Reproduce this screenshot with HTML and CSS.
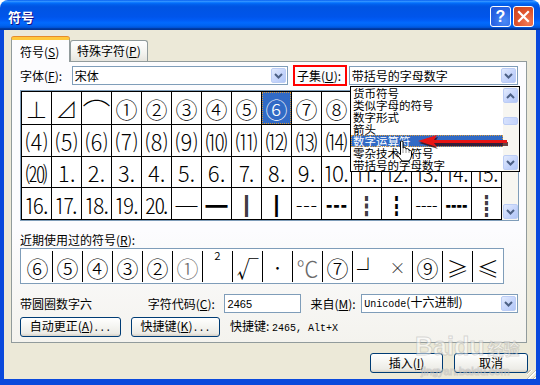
FILE: index.html
```html
<!DOCTYPE html>
<html lang="zh-CN">
<head>
    <meta charset="UTF-8">
    <title>符号</title>
    <link rel="stylesheet" href="styles.css">
</head>
<body>

<div class="window">
    <div class="titlebar">
        <span class="title">符号</span>
        <div class="caption-buttons">
            <span class="cap-btn cap-help">?</span>
            <span class="cap-btn cap-close">
                <svg width="13" height="13" viewBox="0 0 13 13"><path d="M2 2 L11 11 M11 2 L2 11" stroke="#fff" stroke-width="2.2" stroke-linecap="square"/></svg>
            </span>
        </div>
    </div>

    <div class="frame">
        <div class="tabs">
            <div class="tab active">符号(<u>S</u>)</div>
            <div class="tab">特殊字符(<u>P</u>)</div>
        </div>

        <div class="panel">
            <div class="font-row">
                <span class="font-label">字体(<u>F</u>):</span>
                <div class="combo combo-font">
                    <span class="combo-text">宋体</span>
                    <span class="drop-btn"><svg width="9" height="6" viewBox="0 0 9 6"><path d="M1 1 L4.5 4.5 L8 1" fill="none" stroke="#4D6185" stroke-width="2"/></svg></span>
                </div>
                <span class="subset-label">子集(<u>U</u>):</span>
                <div class="combo combo-subset">
                    <span class="combo-text">带括号的字母数字</span>
                    <span class="drop-btn"><svg width="9" height="6" viewBox="0 0 9 6"><path d="M1 1 L4.5 4.5 L8 1" fill="none" stroke="#4D6185" stroke-width="2"/></svg></span>
                </div>
            </div>

            <div class="symbol-box">
                <div class="symbol-grid">
                    <span class="cell">⊥</span><span class="cell">⊿</span><span class="cell arc">⌒</span><span class="cell">①</span>
                    <span class="cell">②</span><span class="cell">③</span><span class="cell">④</span><span class="cell">⑤</span>
                    <span class="cell sel">⑥</span><span class="cell">⑦</span><span class="cell">⑧</span><span class="cell">⑨</span>
                    <span class="cell">⑩</span><span class="cell">⑴</span><span class="cell">⑵</span><span class="cell">⑶</span>

                    <span class="cell">⑷</span><span class="cell">⑸</span><span class="cell">⑹</span><span class="cell">⑺</span>
                    <span class="cell">⑻</span><span class="cell">⑼</span><span class="cell">⑽</span><span class="cell">⑾</span>
                    <span class="cell">⑿</span><span class="cell">⒀</span><span class="cell">⒁</span><span class="cell">⒂</span>
                    <span class="cell">⒃</span><span class="cell">⒄</span><span class="cell">⒅</span><span class="cell">⒆</span>

                    <span class="cell">⒇</span><span class="cell">⒈</span><span class="cell">⒉</span><span class="cell">⒊</span>
                    <span class="cell">⒋</span><span class="cell">⒌</span><span class="cell">⒍</span><span class="cell">⒎</span>
                    <span class="cell">⒏</span><span class="cell">⒐</span><span class="cell">⒑</span><span class="cell">⒒</span>
                    <span class="cell">⒓</span><span class="cell">⒔</span><span class="cell">⒕</span><span class="cell">⒖</span>

                    <span class="cell">⒗</span><span class="cell">⒘</span><span class="cell">⒙</span><span class="cell">⒚</span>
                    <span class="cell">⒛</span><span class="cell">─</span><span class="cell">━</span><span class="cell heavy">│</span>
                    <span class="cell">┃</span><span class="cell">┄</span><span class="cell">┅</span><span class="cell heavy">┆</span>
                    <span class="cell">┇</span><span class="cell">┈</span><span class="cell">┉</span><span class="cell heavy">┊</span>
                </div>
                <div class="vscroll">
                    <span class="sb-btn"><svg width="9" height="6" viewBox="0 0 9 6"><path d="M1 5 L4.5 1.5 L8 5" fill="none" stroke="#4D6185" stroke-width="2"/></svg></span>
                    <span class="sb-track"></span>
                    <span class="sb-btn"><svg width="9" height="6" viewBox="0 0 9 6"><path d="M1 1 L4.5 4.5 L8 1" fill="none" stroke="#4D6185" stroke-width="2"/></svg></span>
                </div>
            </div>

            <div class="recent-label">近期使用过的符号(<u>R</u>):</div>
            <div class="recent">
                <span class="rcell">⑥</span><span class="rcell">⑤</span><span class="rcell">④</span><span class="rcell">③</span>
                <span class="rcell">②</span><span class="rcell gray">①</span><span class="rcell sup">²</span><span class="rcell">√</span>
                <span class="rcell dot">·</span><span class="rcell gray">℃</span><span class="rcell">⑦</span><span class="rcell open">┘</span>
                <span class="rcell small">×</span><span class="rcell">⑨</span><span class="rcell">≥</span><span class="rcell">≤</span>
            </div>

            <div class="info-row">
                <span class="char-name">带圆圈数字六</span>
                <span class="code-label">字符代码(<u>C</u>):</span>
                <div class="text-input">2465</div>
                <span class="from-label">来自(<u>M</u>):</span>
                <div class="combo combo-from">
                    <span class="combo-text"><span class="mono">Unicode</span>(十六进制)</span>
                    <span class="drop-btn"><svg width="9" height="6" viewBox="0 0 9 6"><path d="M1 1 L4.5 4.5 L8 1" fill="none" stroke="#4D6185" stroke-width="2"/></svg></span>
                </div>
            </div>

            <div class="action-row">
                <button class="xp-button btn-autocorrect">自动更正(<u>A</u>)<span class="mono">...</span></button>
                <button class="xp-button btn-shortcut">快捷键(<u>K</u>)<span class="mono">...</span></button>
                <span class="shortcut-text">快捷键: <span class="mono">2465, Alt+X</span></span>
            </div>

            <!-- opened subset dropdown, lies over the grid -->
            <div class="subset-list">
                <div class="list-items">
                    <div class="list-item">货币符号</div>
                    <div class="list-item">类似字母的符号</div>
                    <div class="list-item">数字形式</div>
                    <div class="list-item">箭头</div>
                    <div class="list-item hot">数字运算符</div>
                    <div class="list-item">零杂技术用符号</div>
                    <div class="list-item">带括号的字母数字</div>
                </div>
                <div class="list-scroll">
                    <span class="sb-btn"><svg width="9" height="6" viewBox="0 0 9 6"><path d="M1 5 L4.5 1.5 L8 5" fill="none" stroke="#4D6185" stroke-width="2"/></svg></span>
                    <span class="list-track"><span class="list-thumb"></span></span>
                    <span class="sb-btn"><svg width="9" height="6" viewBox="0 0 9 6"><path d="M1 1 L4.5 4.5 L8 1" fill="none" stroke="#4D6185" stroke-width="2"/></svg></span>
                </div>
            </div>

            <svg class="red-arrow" width="94" height="18" viewBox="0 0 94 18">
                <path d="M3 10 L22 4 L19 9 L92 9 L92 13 L19 13 L22 16 Z" fill="#3a0808" opacity="0.75"/>
                <path d="M2 8 L21 2 L18 7 L91 7 L91 10 L18 10 L21 14 Z" fill="#E81515"/>
            </svg>

            <svg class="hand" width="18" height="22" viewBox="0 0 18 22">
                <path d="M5.5 1.5 Q7 0.5 8 1.5 L8 8 Q9.5 7 11 8 L11 9 Q12.5 8 14 9.5 L14 10.5 Q15.5 10 16.5 11.5 L16.5 16 Q16 19 14 21 L7 21 L2 14.5 Q1 12.5 3 12.5 L5.5 14.5 Z" fill="#fff" stroke="#000" stroke-width="1"/>
                <path d="M8 8 L8 13 M11 9 L11 13 M14 10.5 L14 13" stroke="#999" stroke-width="1"/>
            </svg>
        </div>

        <div class="footer">
            <button class="xp-button btn-insert">插入(<u>I</u>)</button>
            <button class="xp-button btn-cancel">取消</button>
        </div>

        <div class="watermark">
            <span class="wm-logo">Bai<span class="wm-du">du</span><span class="wm-cn">经验</span></span>
            <span class="wm-url">jingyan.baidu.com</span>
        </div>
        <span class="grip"></span>
    </div>
</div>

</body>
</html>
```

FILE: styles.css
```css
/* XP style symbol dialog */
body {
    margin: 0;
    width: 540px;
    height: 385px;
    overflow: hidden;
    background: #fff;
    font-family: "Noto Sans CJK SC", sans-serif;
    font-size: 12px;
    line-height: 14px;
    color: #000;
}

u {
    text-decoration: underline;
    text-underline-offset: 1px;
}

.mono {
    font-family: "Liberation Mono", monospace;
    font-size: 10px;
}

.window {
    width: 540px;
    height: 385px;
    display: flex;
    flex-direction: column;
    border-radius: 8px 8px 0 0;
    overflow: hidden;
}

/* title bar */
.titlebar {
    height: 30px;
    flex: none;
    display: flex;
    align-items: center;
    justify-content: space-between;
    padding: 0 6px 0 8px;
    background: linear-gradient(#0058EE 0%, #3593FF 4%, #288EFF 6%, #127DFF 8%, #036FFC 10%, #0262EE 14%, #0057E5 20%, #0054E3 24%, #0055EB 56%, #005BF5 66%, #026AFE 76%, #0062EF 86%, #0052D6 92%, #0040AB 94%, #003092 100%);
}

.title {
    color: #fff;
    font-weight: bold;
    font-size: 13px;
    padding-top: 3px;
    text-shadow: 1px 1px #0F1089;
}

.caption-buttons {
    display: flex;
    gap: 2px;
    padding-top: 3px;
}

.cap-btn {
    width: 21px;
    height: 21px;
    box-sizing: border-box;
    border: 1px solid #fff;
    border-radius: 3px;
    display: flex;
    align-items: center;
    justify-content: center;
}

.cap-help {
    background: radial-gradient(circle at 70% 75%, #4C8BF5 0%, #2A66E6 55%, #1F55D6 100%);
    color: #fff;
    font-family: "Liberation Sans", sans-serif;
    font-weight: bold;
    font-size: 16px;
}

.cap-close {
    background: radial-gradient(circle at 75% 80%, #F27A55 0%, #E0552E 50%, #C9421C 100%);
}

/* window body */
.frame {
    flex: 1;
    position: relative;
    display: flex;
    flex-direction: column;
    background: #ECE9D8;
    border-style: solid;
    border-color: #0A49DC;
    border-width: 0 4px 6px 4px;
}

.tabs {
    display: flex;
    align-items: flex-end;
    height: 24px;
    margin: 7px 0 0 7px;
    position: relative;
    z-index: 1;
}

.tab {
    height: 21px;
    box-sizing: border-box;
    padding: 0 6px;
    display: flex;
    align-items: center;
    border: 1px solid #919B9C;
    border-bottom: none;
    border-radius: 3px 3px 0 0;
    background: linear-gradient(#FFFFFF, #F3F3EF 60%, #E6E5DE);
}

.tab.active {
    width: 59px;
    height: 25px;
    padding: 2px 0 0 8px;
    margin-bottom: -1px;
    background: #FCFCFE;
    border-top: 3px solid #FFC83C;
    box-shadow: 0 -1px 0 #E68B2C;
}

.panel {
    position: relative;
    width: 516px;
    height: 282px;
    box-sizing: border-box;
    margin-left: 7px;
    padding: 4px 8px 0;
    border: 1px solid #919B9C;
    background: linear-gradient(#FCFCFE 60%, #F4F3EE);
}

/* font / subset row */
.font-row {
    display: flex;
    align-items: center;
    height: 19px;
}

.font-label {
    width: 52px;
}

.subset-label {
    position: relative;
    width: 56px;
    box-sizing: border-box;
    margin-left: 5px;
    padding-left: 4px;
}

.subset-label::after {
    content: "";
    position: absolute;
    left: 0;
    top: -4px;
    width: 54px;
    height: 21px;
    box-sizing: border-box;
    border: 2px solid #F00;
}

.combo {
    height: 19px;
    box-sizing: border-box;
    display: flex;
    align-items: center;
    justify-content: space-between;
    padding-left: 2px;
    border: 1px solid #7F9DB9;
    background: #fff;
}

.combo-font {
    width: 217px;
}

.combo-subset {
    width: 170px;
}

.drop-btn, .sb-btn {
    width: 15px;
    height: 15px;
    margin-right: 1px;
    box-sizing: border-box;
    display: flex;
    align-items: center;
    justify-content: center;
    border: 1px solid #BCCDF5;
    border-radius: 2px;
    background: linear-gradient(135deg, #E3EBFD, #C3D3FB 60%, #B1C6F6);
}

/* symbol grid */
.symbol-box {
    display: flex;
    width: 499px;
    height: 131px;
    box-sizing: border-box;
    margin-top: 5px;
    border: 1px solid #7F9DB9;
}

.symbol-grid {
    display: grid;
    grid-template-columns: repeat(16, 29px);
    grid-template-rows: repeat(4, 1fr);
    gap: 1px;
    padding: 1px;
    width: 481px;
    box-sizing: border-box;
    background: #000;
}

.cell {
    display: flex;
    align-items: center;
    justify-content: center;
    background: #fff;
    font-family: "Noto Sans CJK SC", "DejaVu Sans", sans-serif;
    font-size: 22px;
    font-weight: 300;
    line-height: 24px;
}

.cell.arc {
    font-size: 28px;
    padding-top: 8px;
}

.cell.heavy {
    text-shadow: 1px 0 #000, -1px 0 #000;
}

.cell.sel {
    background: #316AC5;
    color: #fff;
    outline: 1px dotted #D89A3A;
    outline-offset: -1px;
}

.vscroll {
    width: 16px;
    display: flex;
    flex-direction: column;
    align-items: center;
    background: #F7F6F1;
}

.vscroll .sb-btn {
    margin: 1px 0;
}

.sb-track {
    flex: 1;
}

/* recently used */
.recent-label {
    margin-top: 13px;
    height: 12px;
    line-height: 12px;
}

.recent {
    display: flex;
    width: 484px;
    height: 36px;
    box-sizing: border-box;
    margin-top: 2px;
    padding: 2px 0 1px 2px;
    border: 1px solid #7F9DB9;
    background: #fff;
}

.rcell {
    width: 30px;
    box-sizing: border-box;
    display: flex;
    align-items: center;
    justify-content: center;
    border-right: 1px solid #000;
    font-family: "Noto Sans CJK SC", "DejaVu Sans", sans-serif;
    font-size: 22px;
    font-weight: 300;
    line-height: 24px;
}

.rcell:last-child, .rcell.open {
    border-right: none;
}

.rcell.gray {
    color: #6A6A6A;
}

.rcell.sup {
    align-items: flex-start;
    font-size: 18px;
    line-height: 18px;
}

.rcell.dot {
    font-size: 14px;
}

.rcell.small {
    font-size: 16px;
    color: #333;
}

/* info and buttons */
.info-row {
    display: flex;
    align-items: center;
    height: 19px;
    margin-top: 10px;
}

.char-name {
    width: 128px;
}

.code-label {
    width: 76px;
}

.text-input {
    width: 78px;
    height: 19px;
    box-sizing: border-box;
    padding: 2px 0 0 3px;
    border: 1px solid #7F9DB9;
    background: #fff;
    font-family: "Liberation Sans", sans-serif;
    font-size: 11px;
}

.from-label {
    width: 51px;
    margin-left: 9px;
}

.combo-from {
    width: 157px;
}

.action-row {
    display: flex;
    align-items: center;
    gap: 10px;
    margin-top: 4px;
}

.xp-button {
    height: 20px;
    box-sizing: border-box;
    padding: 0;
    border: 1px solid #003C74;
    border-radius: 3px;
    background: linear-gradient(#FFFFFF, #F4F4F0 50%, #ECEBE6 85%, #D6D0C5);
    font-family: "Noto Sans CJK SC", sans-serif;
    font-size: 12px;
    line-height: 14px;
    color: #000;
}

.btn-autocorrect {
    width: 101px;
}

.btn-shortcut {
    width: 89px;
}

/* opened dropdown list */
.subset-list {
    position: absolute;
    left: 338px;
    top: 24px;
    width: 170px;
    height: 86px;
    box-sizing: border-box;
    display: flex;
    border: 1px solid #000;
    background: #fff;
    overflow: hidden;
}

.list-items {
    flex: 1;
}

.list-item {
    height: 12px;
    line-height: 12px;
    font-size: 11.5px;
    padding-left: 2px;
    white-space: nowrap;
}

.list-item.hot {
    background: #316AC5;
    color: #fff;
    outline: 1px dotted #D89A3A;
    outline-offset: -1px;
}

.list-scroll {
    width: 16px;
    display: flex;
    flex-direction: column;
    background: #F7F6F1;
}

.list-scroll .sb-btn {
    margin: 1px 0;
}

.list-track {
    flex: 1;
    padding-top: 13px;
}

.list-thumb {
    display: block;
    width: 15px;
    height: 8px;
    box-sizing: border-box;
    border: 1px solid #BCCDF5;
    border-radius: 2px;
    background: linear-gradient(90deg, #D6E1FC, #C3D3FB);
}

.red-arrow {
    position: absolute;
    left: 404px;
    top: 71px;
}

.hand {
    position: absolute;
    left: 383px;
    top: 78px;
}

/* bottom buttons */
.footer {
    display: flex;
    justify-content: flex-end;
    gap: 11px;
    margin-top: 10px;
    padding-right: 8px;
}

.btn-insert {
    width: 73px;
}

.btn-cancel {
    width: 74px;
}

.watermark {
    position: absolute;
    left: 411px;
    top: 303px;
    display: flex;
    flex-direction: column;
    pointer-events: none;
    color: rgba(255, 255, 255, 0.5);
    -webkit-text-stroke: 1px rgba(150, 150, 150, 0.35);
}

.wm-logo {
    font-family: "Liberation Sans", sans-serif;
    font-weight: bold;
    font-size: 25px;
    line-height: 26px;
}

.wm-cn {
    font-family: "Noto Sans CJK SC", sans-serif;
    font-size: 16px;
    margin-left: 3px;
}

.wm-url {
    font-family: "Liberation Sans", sans-serif;
    font-size: 11px;
    line-height: 12px;
    margin: 4px 0 0 6px;
}

.grip {
    position: absolute;
    right: 0;
    bottom: 0;
    width: 9px;
    height: 9px;
    background: repeating-linear-gradient(135deg, transparent 0 2px, #C5C2B2 2px 3px, #fff 3px 4px);
}
```
